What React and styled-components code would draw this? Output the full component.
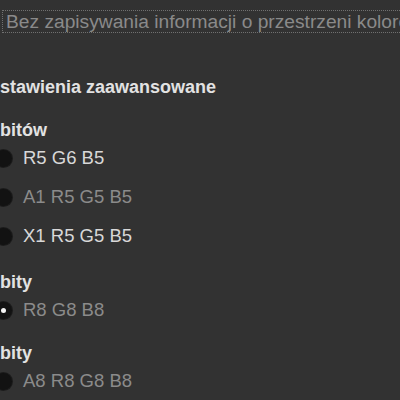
import React from "react";
import styled, { createGlobalStyle } from "styled-components";

const GlobalStyle = createGlobalStyle`
  html, body {
    margin: 0;
    padding: 0;
    background: #323232;
    overflow: hidden;
  }
  body {
    font-family: "Liberation Sans", Arial, sans-serif;
  }
`;

const Dialog = styled.div`
  width: 400px;
  height: 400px;
  overflow: hidden;
  padding-top: 10px;
  box-sizing: border-box;
`;

const FocusOption = styled.div`
  margin-left: 2px;
  height: 21px;
  border: 1px dotted #707070;
  border-right: none;
  display: flex;
  align-items: center;
  padding-left: 3px;
  white-space: nowrap;
  font-size: 19.2px;
  color: #8a8a8a;
`;

const Content = styled.div`
  margin-left: -25px;
  display: flex;
  flex-direction: column;
`;

const Title = styled.div`
  margin: 43px 0 0 12px;
  height: 22px;
  line-height: 22px;
  font-size: 18px;
  font-weight: 700;
  color: #e2e2e2;
  white-space: nowrap;
`;

const Heading = styled.div`
  margin-top: ${(p) => p.$gap}px;
  height: 22px;
  line-height: 22px;
  font-size: 18px;
  font-weight: 700;
  color: #e2e2e2;
  white-space: nowrap;
`;

const Group = styled.div`
  display: flex;
  flex-direction: column;
  gap: 17px;
  margin-top: 6px;
  padding-left: 20px;
`;

const Row = styled.label`
  display: flex;
  align-items: center;
  gap: 11px;
  height: 22px;
  font-size: 18.5px;
  color: ${(p) => (p.$disabled ? "#8b8b8b" : "#d8d8d8")};
  white-space: nowrap;
`;

const Radio = styled.span`
  width: 17px;
  height: 17px;
  border-radius: 50%;
  background: #121212;
  box-shadow: 0 0 0 1px #1c1c1c;
  display: flex;
  align-items: center;
  justify-content: center;
  flex-shrink: 0;

  &::after {
    content: "";
    width: 5px;
    height: 5px;
    border-radius: 50%;
    background: ${(p) => (p.$checked ? "#f4f4f4" : "transparent")};
  }
`;

const groups = [
  {
    label: "16 bitów",
    gap: 21,
    options: [
      { text: "R5 G6 B5" },
      { text: "A1 R5 G5 B5", disabled: true },
      { text: "X1 R5 G5 B5" },
    ],
  },
  {
    label: "24 bity",
    gap: 24,
    options: [{ text: "R8 G8 B8", disabled: true, checked: true }],
  },
  {
    label: "32 bity",
    gap: 21,
    options: [{ text: "A8 R8 G8 B8", disabled: true }],
  },
];

export default function App() {
  return (
    <Dialog>
      <GlobalStyle />
      <FocusOption>
        Bez zapisywania informacji o przestrzeni kolorów
      </FocusOption>
      <Content>
        <Title>Ustawienia zaawansowane</Title>
        {groups.map((g) => (
          <React.Fragment key={g.label}>
            <Heading $gap={g.gap}>{g.label}</Heading>
            <Group>
              {g.options.map((o) => (
                <Row key={o.text} $disabled={o.disabled}>
                  <Radio $checked={o.checked} />
                  {o.text}
                </Row>
              ))}
            </Group>
          </React.Fragment>
        ))}
      </Content>
    </Dialog>
  );
}
